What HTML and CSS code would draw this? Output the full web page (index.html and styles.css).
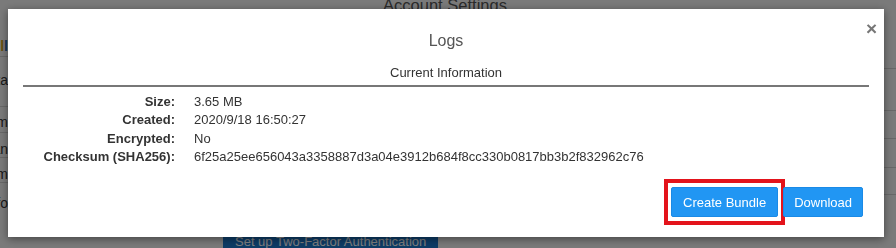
FILE: index.html
```html
<!DOCTYPE html>
<html lang="en">
  <head>
    <meta charset="UTF-8" />
    <meta name="viewport" content="width=device-width, initial-scale=1.0" />
    <title>Account Settings</title>
    <link rel="stylesheet" href="styles.css">
  </head>
  <body>
    <div class="page">
      <h1 class="page-title">Account Settings</h1>
      <div class="page-body">
        <ul class="side-list side-left">
          <li><span class="c1">l</span><span class="c2">l</span></li>
          <li>Data</li>
          <li>Sum</li>
          <li>Plan</li>
          <li>Term</li>
          <li>Info</li>
        </ul>
        <div class="page-main">
          <button class="btn-dark" type="button">Set up Two-Factor Authentication</button>
        </div>
        <ul class="side-list side-right">
          <li></li>
          <li></li>
          <li></li>
          <li></li>
          <li></li>
        </ul>
      </div>
    </div>

    <div class="overlay">
      <div class="modal">
        <button class="modal-close" type="button">&times;</button>
        <h2 class="modal-title">Logs</h2>
        <div class="modal-body">
          <h3 class="section-title">Current Information</h3>
          <div class="info-grid">
            <span class="info-label">Size:</span>
            <span class="info-value">3.65 MB</span>
            <span class="info-label">Created:</span>
            <span class="info-value">2020/9/18 16:50:27</span>
            <span class="info-label">Encrypted:</span>
            <span class="info-value">No</span>
            <span class="info-label">Checksum (SHA256):</span>
            <span class="info-value">6f25a25ee656043a3358887d3a04e3912b684f8cc330b0817bb3b2f832962c76</span>
          </div>
        </div>
        <div class="modal-footer">
          <span class="mark">
            <button class="btn btn-create" type="button">Create Bundle</button>
          </span>
          <button class="btn" type="button">Download</button>
        </div>
      </div>
    </div>
  </body>
</html>
```

FILE: styles.css
```css
/* Pagina de fondo */
body {
  font-family: "Liberation Sans", Arial, sans-serif;
  background-color: #f5f5f5;
  margin: 0;
  padding: 0;
  color: #333;
  overflow: hidden;
}

.page {
  height: 248px;
  overflow: hidden;
}

.page-title {
  font-size: 16.5px;
  font-weight: normal;
  color: #555;
  text-align: center;
  margin: -5px 0 0 -6px;
  line-height: 20px;
}

.page-body {
  display: flex;
}

.side-list {
  list-style: none;
  margin: 0;
  padding: 0;
}

.side-left {
  width: 8px;
  overflow: hidden;
  margin-top: 11px;
}

.side-left li {
  text-align: right;
  font-size: 14px;
  white-space: nowrap;
  color: #333;
  border-bottom: 1px solid #d0d0d0;
  display: flex;
  justify-content: flex-end;
  align-items: flex-end;
  box-sizing: border-box;
}

.side-left li:nth-child(1) { height: 31px; padding-bottom: 2px; font-weight: bold; }
.side-left li:nth-child(2) { height: 50px; padding-bottom: 18px; }
.side-left li:nth-child(3) { height: 26px; padding-bottom: 2px; }
.side-left li:nth-child(4) { height: 25px; padding-bottom: 0; }
.side-left li:nth-child(5) { height: 25px; padding-bottom: 0; }
.side-left li:nth-child(6) { height: 40px; padding-bottom: 0; border-bottom: none; align-items: center; }

.c1 { color: #c8a020; }
.c2 { color: #2b6cb0; }

.page-main {
  flex: 1;
  padding: 210px 0 0 215px;
}

.btn-dark {
  font-family: inherit;
  font-size: 13px;
  background-color: #1b78cc;
  color: #fff;
  border: none;
  border-radius: 2px;
  height: 32px;
  padding: 0 12px;
}

.side-right {
  width: 12px;
  margin-top: 34px;
}

.side-right li {
  border-bottom: 1px solid #d0d0d0;
}

.side-right li:nth-child(1) { height: 19px; }
.side-right li:nth-child(2) { height: 41px; }
.side-right li:nth-child(3) { height: 27px; }
.side-right li:nth-child(4) { height: 28px; }
.side-right li:nth-child(5) { height: 26px; }

/* Ventana modal */
.overlay {
  position: fixed;
  inset: 0;
  background-color: rgba(0, 0, 0, 0.5);
  padding: 9px 12px 0 8px;
}

.modal {
  position: relative;
  background-color: #ffffff;
  box-shadow: 0 2px 8px rgba(0, 0, 0, 0.45);
  padding: 22px 0 20px;
}

.modal-close {
  position: absolute;
  top: 10px;
  right: 7px;
  background: none;
  border: none;
  padding: 0;
  font-family: inherit;
  font-size: 19px;
  font-weight: bold;
  line-height: 20px;
  color: #777;
  cursor: pointer;
}

.modal-title {
  margin: 0;
  font-size: 16px;
  font-weight: normal;
  line-height: 20px;
  color: #555;
  text-align: center;
}

.modal-body {
  margin: 14px 15px 0;
}

.section-title {
  margin: 0;
  font-size: 13px;
  font-weight: normal;
  line-height: 16px;
  color: #333;
  text-align: center;
  padding-bottom: 4px;
  border-bottom: 2px solid #777;
}

.info-grid {
  display: grid;
  grid-template-columns: 152px auto;
  column-gap: 19px;
  margin-top: 6px;
  font-size: 13px;
  line-height: 18.3px;
  color: #333;
}

.info-label {
  font-weight: bold;
  text-align: right;
}

.modal-footer {
  display: flex;
  align-items: center;
  justify-content: flex-end;
  gap: 5px;
  margin-top: 21px;
  padding-right: 21px;
}

/* Marca roja alrededor del boton */
.mark {
  display: flex;
  padding: 4px 3px;
  margin: -8px -7px;
  border: 4px solid #e3131b;
}

.btn {
  font-family: inherit;
  font-size: 13px;
  height: 30px;
  padding: 0 10px;
  background-color: #2196f3;
  color: #fff;
  border: 1px solid #1a8ae6;
  border-radius: 2px;
  cursor: pointer;
}

.btn-create {
  padding: 0 11px;
}
```
